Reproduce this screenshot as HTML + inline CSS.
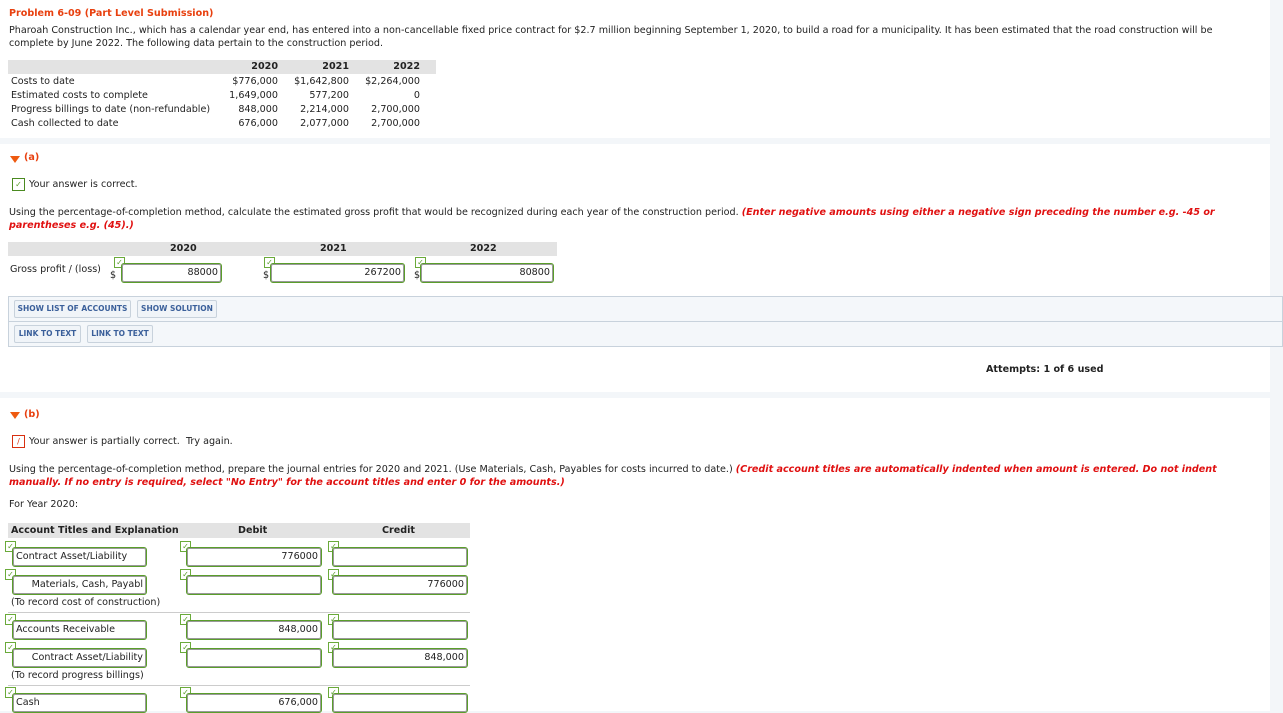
<!DOCTYPE html>
<html><head><style>
*{margin:0;padding:0;box-sizing:border-box}
body{width:1283px;height:711px;overflow:hidden;background:#f3f6f9;font-family:Verdana,"DejaVu Sans","Liberation Sans",sans-serif;font-size:9.6px;color:#222;position:relative}
.a{position:absolute;white-space:nowrap}
.panel{position:absolute;left:0;background:#fff;width:1270px}
.red{color:#e8400f;font-weight:bold}
.warn{color:#e01010;font-weight:bold;font-style:italic}
.b{font-weight:bold}
.tri{position:absolute;width:0;height:0;border-left:5px solid transparent;border-right:5px solid transparent;border-top:7px solid #ee5a10}
.inp{position:absolute;border:1.5px solid #5a9e2a;border-radius:3px;background:#fff;height:20px;box-shadow:inset 0 0 0 1px #999;overflow:hidden}
.inp span{position:absolute;top:3px;font-size:9.6px;white-space:nowrap}
.ck{position:absolute;width:11px;height:11px;border:1px solid #6aaa3a;background:#fff;color:#5a9e2a;font-size:8px;line-height:9px;text-align:center}
.btn{position:absolute;height:18px;background:#f0f4f8;border:1px solid #c8d2dc;border-radius:2px;color:#3a5f9a;font-weight:bold;font-size:7.5px;line-height:16px;text-align:center;white-space:nowrap}
.hdr{position:absolute;background:#e3e3e3;height:14px}
.r{text-align:right}
</style></head><body>
<div class="panel" style="top:0;height:138px"></div>
<div class="a red" style="left:9px;top:8px">Problem 6-09 (Part Level Submission)</div>
<div class="a" style="left:9px;top:24px;line-height:13px">Pharoah Construction Inc., which has a calendar year end, has entered into a non-cancellable fixed price contract for $2.7 million beginning September 1, 2020, to build a road for a municipality. It has been estimated that the road construction will be<br>complete by June 2022. The following data pertain to the construction period.</div>
<div class="hdr" style="left:8px;top:60px;width:428px"></div>
<div class="a b r" style="left:200px;top:61px;width:78px">2020</div>
<div class="a b r" style="left:270px;top:61px;width:79px">2021</div>
<div class="a b r" style="left:340px;top:61px;width:80px">2022</div>
<div class="a" style="left:11px;top:75px;line-height:14px">Costs to date<br>Estimated costs to complete<br>Progress billings to date (non-refundable)<br>Cash collected to date</div>
<div class="a r" style="left:200px;top:75px;width:78px;line-height:14px">$776,000<br>1,649,000<br>848,000<br>676,000</div>
<div class="a r" style="left:270px;top:75px;width:79px;line-height:14px">$1,642,800<br>577,200<br>2,214,000<br>2,077,000</div>
<div class="a r" style="left:340px;top:75px;width:80px;line-height:14px">$2,264,000<br>0<br>2,700,000<br>2,700,000</div>

<div class="panel" style="top:144px;height:248px"></div>
<div class="tri" style="left:10px;top:156px"></div>
<div class="a red" style="left:24px;top:152px">(a)</div>
<div class="ck" style="left:12px;top:178px;width:13px;height:13px;border-color:#4a8a20;line-height:11px">✓</div>
<div class="a" style="left:29px;top:179px">Your answer is correct.</div>
<div class="a" style="left:9px;top:206px;line-height:13px">Using the percentage-of-completion method, calculate the estimated gross profit that would be recognized during each year of the construction period. <span class="warn">(Enter negative amounts using either a negative sign preceding the number e.g. -45 or<br>parentheses e.g. (45).)</span></div>
<div class="hdr" style="left:8px;top:242px;width:549px"></div>
<div class="a b" style="left:170px;top:243px">2020</div>
<div class="a b" style="left:320px;top:243px">2021</div>
<div class="a b" style="left:470px;top:243px">2022</div>
<div class="a" style="left:10px;top:264px">Gross profit / (loss)</div>
<div class="a" style="left:110px;top:270px">$</div><div class="ck" style="left:114px;top:257px">✓</div>
<div class="inp" style="left:121px;top:263px;width:101px"><span style="right:3px">88000</span></div>
<div class="a" style="left:263px;top:270px">$</div><div class="ck" style="left:264px;top:257px">✓</div>
<div class="inp" style="left:270px;top:263px;width:135px"><span style="right:3px">267200</span></div>
<div class="a" style="left:414px;top:270px">$</div><div class="ck" style="left:415px;top:257px">✓</div>
<div class="inp" style="left:420px;top:263px;width:134px"><span style="right:3px">80800</span></div>
<div class="a" style="left:8px;top:296px;width:1275px;height:51px;background:#f4f7fa;border:1px solid #c8d2dc"></div>
<div class="a" style="left:9px;top:321px;width:1273px;height:1px;background:#c8d2dc"></div>
<div class="btn" style="left:14px;top:300px;width:117px">SHOW LIST OF ACCOUNTS</div>
<div class="btn" style="left:137px;top:300px;width:80px">SHOW SOLUTION</div>
<div class="btn" style="left:14px;top:325px;width:67px">LINK TO TEXT</div>
<div class="btn" style="left:87px;top:325px;width:66px">LINK TO TEXT</div>
<div class="a b" style="left:986px;top:364px">Attempts: 1 of 6 used</div>

<div class="panel" style="top:398px;height:313px"></div>
<div class="tri" style="left:10px;top:412px"></div>
<div class="a red" style="left:24px;top:409px">(b)</div>
<div class="ck" style="left:12px;top:435px;width:13px;height:13px;border-color:#d83010;color:#d83010;line-height:11px">/</div>
<div class="a" style="left:29px;top:436px">Your answer is partially correct.&nbsp; Try again.</div>
<div class="a" style="left:9px;top:463px;line-height:13px">Using the percentage-of-completion method, prepare the journal entries for 2020 and 2021. (Use Materials, Cash, Payables for costs incurred to date.) <span class="warn">(Credit account titles are automatically indented when amount is entered. Do not indent<br>manually. If no entry is required, select "No Entry" for the account titles and enter 0 for the amounts.)</span></div>
<div class="a" style="left:9px;top:499px">For Year 2020:</div>
<div class="hdr" style="left:8px;top:523px;width:462px;height:15px"></div>
<div class="a b" style="left:11px;top:525px">Account Titles and Explanation</div>
<div class="a b" style="left:238px;top:525px">Debit</div>
<div class="a b" style="left:382px;top:525px">Credit</div>

<div class="ck" style="left:5px;top:541px">✓</div><div class="inp" style="left:12px;top:547px;width:135px"><span style="left:3px">Contract Asset/Liability</span></div>
<div class="ck" style="left:180px;top:541px">✓</div><div class="inp" style="left:186px;top:547px;width:136px"><span style="right:3px">776000</span></div>
<div class="ck" style="left:328px;top:541px">✓</div><div class="inp" style="left:332px;top:547px;width:136px"></div>

<div class="ck" style="left:5px;top:569px">✓</div><div class="inp" style="left:12px;top:575px;width:135px"><span style="right:3px">Materials, Cash, Payabl</span></div>
<div class="ck" style="left:180px;top:569px">✓</div><div class="inp" style="left:186px;top:575px;width:136px"></div>
<div class="ck" style="left:328px;top:569px">✓</div><div class="inp" style="left:332px;top:575px;width:136px"><span style="right:3px">776000</span></div>
<div class="a" style="left:11px;top:597px">(To record cost of construction)</div>
<div class="a" style="left:8px;top:612px;width:462px;height:1px;background:#ccc"></div>

<div class="ck" style="left:5px;top:614px">✓</div><div class="inp" style="left:12px;top:620px;width:135px"><span style="left:3px">Accounts Receivable</span></div>
<div class="ck" style="left:180px;top:614px">✓</div><div class="inp" style="left:186px;top:620px;width:136px"><span style="right:3px">848,000</span></div>
<div class="ck" style="left:328px;top:614px">✓</div><div class="inp" style="left:332px;top:620px;width:136px"></div>

<div class="ck" style="left:5px;top:642px">✓</div><div class="inp" style="left:12px;top:648px;width:135px"><span style="right:3px">Contract Asset/Liability</span></div>
<div class="ck" style="left:180px;top:642px">✓</div><div class="inp" style="left:186px;top:648px;width:136px"></div>
<div class="ck" style="left:328px;top:642px">✓</div><div class="inp" style="left:332px;top:648px;width:136px"><span style="right:3px">848,000</span></div>
<div class="a" style="left:11px;top:670px">(To record progress billings)</div>
<div class="a" style="left:8px;top:685px;width:462px;height:1px;background:#ccc"></div>

<div class="ck" style="left:5px;top:687px">✓</div><div class="inp" style="left:12px;top:693px;width:135px"><span style="left:3px">Cash</span></div>
<div class="ck" style="left:180px;top:687px">✓</div><div class="inp" style="left:186px;top:693px;width:136px"><span style="right:3px">676,000</span></div>
<div class="ck" style="left:328px;top:687px">✓</div><div class="inp" style="left:332px;top:693px;width:136px"></div>
</body></html>
